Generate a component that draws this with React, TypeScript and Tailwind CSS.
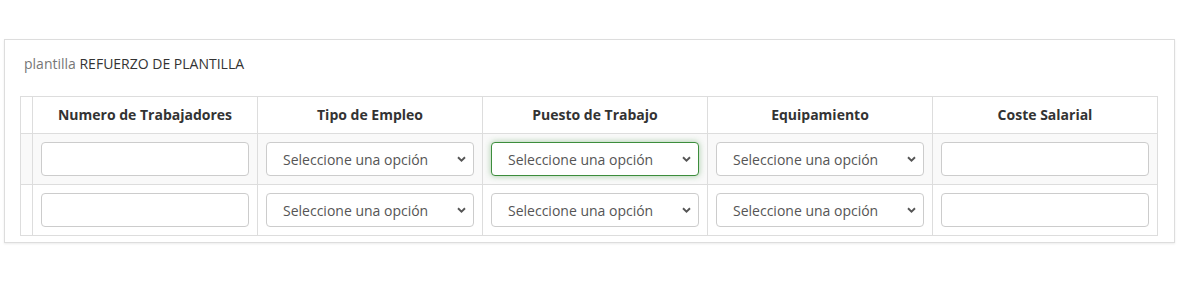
import React from 'react';

const columns = ["Numero de Trabajadores", "Tipo de Empleo", "Puesto de Trabajo", "Equipamiento", "Coste Salarial"];

const Chevron: React.FC = () => (
    <svg className="pointer-events-none absolute right-[8px] top-1/2 -translate-y-1/2" width="9" height="6" viewBox="0 0 9 6">
        <path d="M1 1.2 L4.5 4.6 L8 1.2" fill="none" stroke="#555" strokeWidth="1.9" />
    </svg>
);

const Select: React.FC<{ focused?: boolean }> = ({ focused }) => (
    <div className="relative">
        <select
            defaultValue=""
            className={
                "block w-full h-[34px] appearance-none rounded-[4px] bg-white pl-[16px] pr-[24px] text-[14px] text-[#555] outline-none " +
                (focused
                    ? "border border-[#3c8d3c] shadow-[0_0_6px_rgba(60,141,60,0.45)]"
                    : "border border-[#ccc]")
            }
        >
            <option value="">Seleccione una opción</option>
        </select>
        <Chevron />
    </div>
);

const TextInput: React.FC = () => (
    <input type="text" className="block w-full h-[34px] rounded-[4px] border border-[#ccc] bg-white px-3 text-[14px] text-[#555] outline-none" />
);

const Row: React.FC<{ striped?: boolean; focusCol?: number }> = ({ striped, focusCol }) => (
    <tr className={striped ? "bg-[#f9f9f9]" : "bg-white"}>
        <td className="border border-[#ddd] w-[12px] p-0" />
        <td className="border border-[#ddd] p-[8px]"><TextInput /></td>
        <td className="border border-[#ddd] p-[8px]"><Select /></td>
        <td className="border border-[#ddd] p-[8px]"><Select focused={focusCol === 2} /></td>
        <td className="border border-[#ddd] p-[8px]"><Select /></td>
        <td className="border border-[#ddd] p-[8px]"><TextInput /></td>
    </tr>
);

const App: React.FC = () => {
    return (
        <div className="min-h-[301px] bg-white font-['Open_Sans',sans-serif] text-[#333]">
            <div className="pt-[39px] pl-[4px]">
                <div className="w-[1171px] border border-[#ddd] bg-white px-[15px] pt-[15px] pb-[6px] shadow-[0_1px_2px_rgba(0,0,0,0.08)]">
                    <h3 className="pl-[4px] text-[14px] leading-[18px]">
                        <span className="text-[#777]">plantilla</span> REFUERZO DE PLANTILLA
                    </h3>
                    <table className="mt-[23px] w-[1137px] table-fixed border-collapse">
                        <colgroup>
                            <col className="w-[12px]" />
                            {columns.map(c => <col key={c} className="w-[225px]" />)}
                        </colgroup>
                        <thead>
                            <tr>
                                <th className="border border-[#ddd] p-0" />
                                {columns.map(c => (
                                    <th key={c} className="border border-[#ddd] px-[8px] py-[8px] text-center text-[14px] font-bold leading-[20px] text-[#333]">{c}</th>
                                ))}
                            </tr>
                        </thead>
                        <tbody>
                            <Row striped focusCol={2} />
                            <Row />
                        </tbody>
                    </table>
                </div>
            </div>
        </div>
    );
};

export default App;
